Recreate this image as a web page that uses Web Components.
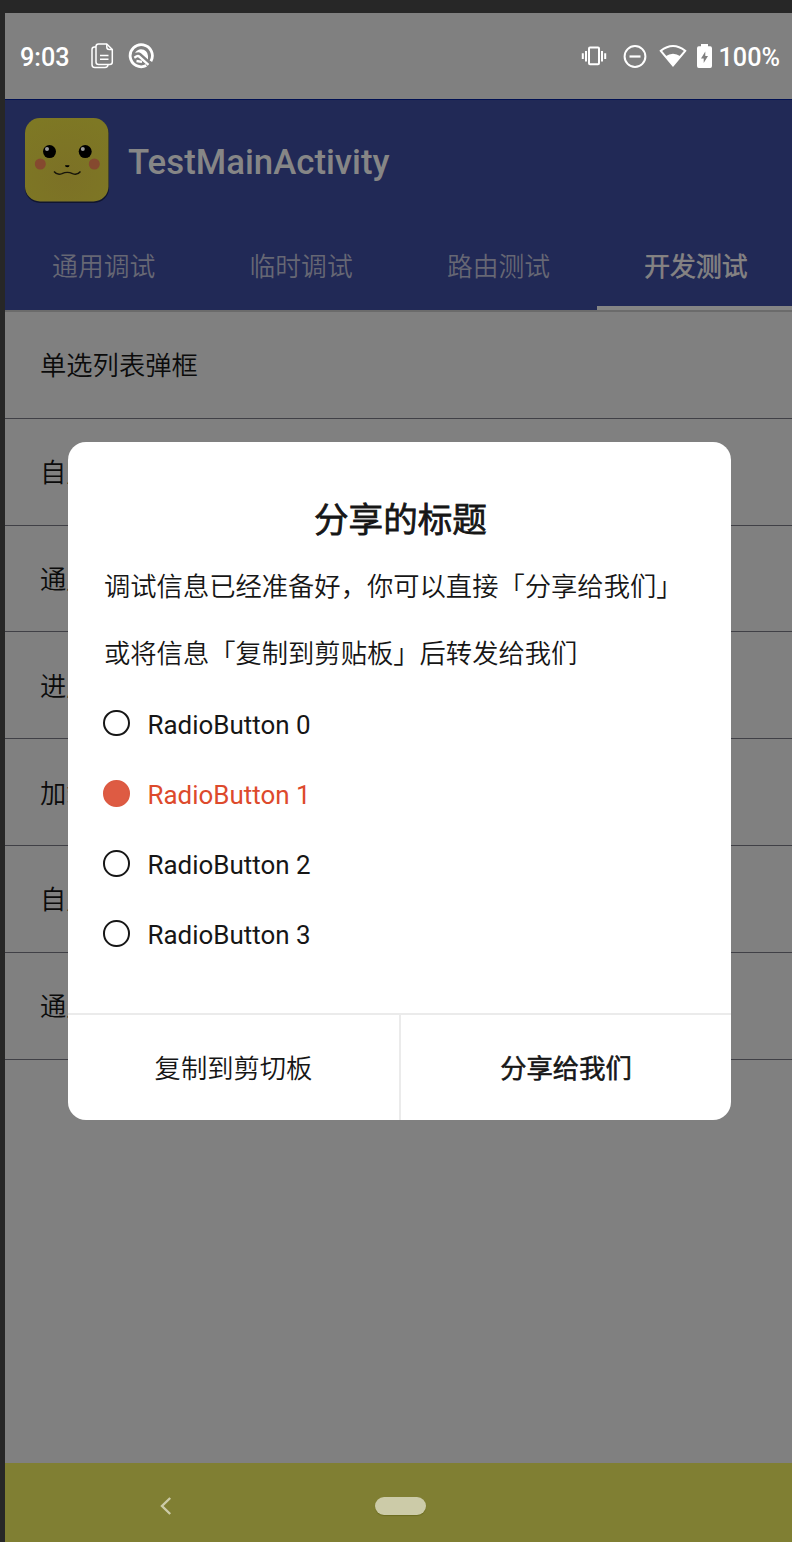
<!DOCTYPE html>
<html lang="zh-CN">
<head>
<meta charset="utf-8">
<title>TestMainActivity</title>
<style>
html,body{margin:0;height:100%;overflow:hidden}
body{background:#272727;font-family:Roboto,"Noto Sans CJK SC",sans-serif}
</style>
</head>
<body>
<phone-screen>
  <status-bar time="9:03" battery="100%"></status-bar>
  <app-bar heading="TestMainActivity">
    <app-tab>通用调试</app-tab>
    <app-tab>临时调试</app-tab>
    <app-tab>路由测试</app-tab>
    <app-tab active>开发测试</app-tab>
  </app-bar>
  <list-view>
    <list-row>单选列表弹框</list-row>
    <list-row>自定</list-row>
    <list-row>通用</list-row>
    <list-row>进度</list-row>
    <list-row>加载</list-row>
    <list-row>自定</list-row>
    <list-row>通用</list-row>
  </list-view>
  <nav-bar></nav-bar>
  <share-dialog slot="overlay">
    <span slot="title">分享的标题</span>
    <span slot="message">调试信息已经准备好，你可以直接「分享给我们」<br>或将信息「复制到剪贴板」后转发给我们</span>
    <radio-item>RadioButton 0</radio-item>
    <radio-item checked>RadioButton 1</radio-item>
    <radio-item>RadioButton 2</radio-item>
    <radio-item>RadioButton 3</radio-item>
    <span slot="cancel">复制到剪切板</span>
    <span slot="confirm">分享给我们</span>
  </share-dialog>
</phone-screen>
<script>
function define(name, html, setup) {
  const t = document.createElement('template');
  t.innerHTML = html;
  customElements.define(name, class extends HTMLElement {
    constructor() {
      super();
      this.attachShadow({mode: 'open'}).append(t.content.cloneNode(true));
      if (setup) setup(this, this.shadowRoot);
    }
  });
}

define('phone-screen', `
<style>
:host{display:block;height:1542px;box-sizing:border-box;padding:13px 0 0 5px}
.body{position:relative;height:1529px;background:#808080;display:flex;flex-direction:column;overflow:hidden}
</style>
<div class="body"><slot></slot><slot name="overlay"></slot></div>`);

define('status-bar', `
<style>
:host{display:flex;align-items:center;height:86px;padding:0 12px 0 15px;flex:none;box-sizing:border-box;color:#fff;font-size:25.2px;font-weight:500}
svg{display:block;flex:none}
span{padding-top:2px}
.time{width:71px}
.gap{flex:1}
</style>
<span class="time"></span>
<svg width="24" height="28" viewBox="0 0 24 28" fill="none" stroke="#fff" stroke-width="1.5" stroke-linejoin="round"><path d="M5 5H3.500Q1 5 1 7.500V22.500Q1 25.500 3.800 25.500H14Q16.800 25.500 17 22.800"/><path d="M7.500 2H15.800L21.300 7.500V20Q21.300 22.500 18.800 22.500H7.500Q5 22.500 5 20V4.500Q5 2 7.500 2Z"/><path d="M15.800 2V5Q15.800 7.500 18.300 7.500H21.300M9 13.500H17.500M9 17.300H17.500"/></svg>
<svg style="margin-left:12px" width="28" height="28" viewBox="0 0 28 28" fill="none" stroke="#fff"><path d="M19.300 23.600A11.100 11.100 0 1 1 23.900 19.200" stroke-width="2.800"/><path d="M8 10.800Q10.500 7.300 14 7.300Q20.500 7.800 21 14V17.500L14 11.300Q12 9.600 10 10.500Z" fill="#fff" stroke="none"/><path d="M7.300 15.800L9.700 14.300Q11.200 13.500 12.600 14.800L21.500 22.800M9.500 19L15 19.800" stroke-width="2.300"/></svg>
<span class="gap"></span>
<svg width="26" height="22" viewBox="0 0 26 22" fill="none" stroke="#fff" stroke-width="2"><rect x="8" y="2.600" width="10" height="16.600" rx="1"/><path d="M5 6V16.500M21 6V16.500M1.800 8.300V14M24.200 8.300V14"/></svg>
<svg style="margin-left:16px" width="24" height="24" viewBox="0 0 24 24" fill="none" stroke="#fff" stroke-width="2"><circle cx="12" cy="12.500" r="10.400"/><path d="M6.500 12.500H17.500" stroke-width="2.200"/></svg>
<svg style="margin-left:12px" width="28" height="24" viewBox="0 0 28 24"><path d="M1.800 6.800Q14-2.800 26.200 6.800L14 21.500Z" fill="none" stroke="#fff" stroke-width="2"/><path d="M6.500 12.300Q14 7 21.500 12.300L14 22Z" fill="#fff"/></svg>
<svg style="margin-left:10px" width="15" height="24" viewBox="0 0 15 24"><path fill="#fff" fill-rule="evenodd" d="M4 0H11V2.300H13.200Q15 2.300 15 4.200V22Q15 24 13.200 24H1.800Q0 24 0 22V4.200Q0 2.300 1.800 2.300H4ZM8.300 7.500L4 14.500H6.700V19L11 12H8.300Z"/></svg>
<span class="battery" style="margin-left:7px"></span>`, (el, root) => {
  root.querySelector('.time').textContent = el.getAttribute('time');
  root.querySelector('.battery').textContent = el.getAttribute('battery');
});

define('app-bar', `
<style>
:host{display:flex;flex-direction:column;height:213px;flex:none;box-sizing:border-box;background:#212956;border-top:1px solid #001052;border-bottom:2px solid #6b6b6b}
.head{display:flex;align-items:center;height:120px;gap:18px;padding-left:19px}
h1{margin:4px 0 0;font-size:34.800px;font-weight:500;color:#868686;line-height:42px}
.tabs{display:flex;flex:1;width:789.600px}
svg{display:block}
</style>
<div class="head">
<svg width="86" height="86" viewBox="0 0 86 86">
<defs><radialGradient id="g" cx=".5" cy=".7" r=".75"><stop offset="0" stop-color="#7c7126"/><stop offset="1" stop-color="#7e7824"/></radialGradient></defs>
<rect x="1" y="2" width="84" height="84" rx="15" fill="#10152f"/>
<rect x="1" y="1" width="83.500" height="83.500" rx="15" fill="url(#g)"/>
<circle cx="25.500" cy="34.600" r="6.500"/><circle cx="61.200" cy="34.600" r="6.500"/>
<circle cx="23" cy="32" r="2" fill="#999"/><circle cx="58.800" cy="32" r="2" fill="#999"/>
<circle cx="16.300" cy="47" r="5.500" fill="#85492f"/><circle cx="70.300" cy="47" r="5.500" fill="#85492f"/>
<path d="M41 48.300H45.500Q45.500 50.300 43.300 50.300Q41 50.300 41 48.300Z"/>
<path d="M30 54.500Q33 58.500 38 56.700Q43.300 54 48.500 56.700Q53.500 58.500 56.500 54.500" fill="none" stroke="#17150a" stroke-width="1.300"/>
</svg><h1></h1></div>
<div class="tabs"><slot></slot></div>`, (el, root) => {
  root.querySelector('h1').textContent = el.getAttribute('heading');
});

define('app-tab', `
<style>
:host{display:flex;flex:1;align-items:center;justify-content:center;box-sizing:border-box;padding-top:8px;font-size:25.8px;font-weight:350;line-height:38px;color:#666774;border-bottom:4px solid transparent}
:host([active]){color:#858383;-webkit-text-stroke:.7px #858383;border-bottom-color:#858585}
</style><slot></slot>`);

define('list-view', `<style>:host{display:block;flex:1;background:#808080}</style><slot></slot>`);

define('list-row', `
<style>
:host{display:flex;align-items:center;height:106.8px;box-sizing:border-box;padding:3px 0 0 35px;border-bottom:1.500px solid #404046;color:#0b0b0b;font-size:26.3px;font-weight:350;line-height:40px}
</style><slot></slot>`);

define('nav-bar', `
<style>
:host{display:grid;grid-template-columns:321px 148px 1fr;align-items:center;justify-items:center;height:79px;flex:none;background:#807f33;padding-top:6px;box-sizing:border-box}
.pill{width:51px;height:18px;border-radius:9px;background:#cccba8;box-shadow:0 1px 1px #6b6c20}
svg{display:block}
</style>
<svg width="12" height="20" viewBox="0 0 12 20" fill="none" stroke="#cccba8" stroke-width="2.400"><path d="M10.200 2L2 10L10.200 18"/></svg>
<div class="pill"></div>`);

define('share-dialog', `
<style>
:host{position:absolute;left:63px;top:429px;width:663px;height:678px;box-sizing:border-box;background:#fff;border-radius:18px;overflow:hidden;display:flex;flex-direction:column;color:#161616;font-size:26.3px;font-weight:350}
.title{margin:52px 0 0 2px;text-align:center;font-size:34.600px;line-height:52px;-webkit-text-stroke:.9px #161616}
.msg{margin:8px 0 0 36px;line-height:67px;white-space:nowrap}
.list{margin:0 0 0 35px}
.foot{margin-top:auto;display:grid;grid-template-columns:331px 1fr;height:107px;box-sizing:border-box;border-top:2px solid #ebebeb}
.foot div{display:flex;align-items:center;justify-content:center;line-height:40px;padding-top:2px}
.foot div+div{border-left:2px solid #ebebeb;-webkit-text-stroke:.7px #161616}
</style>
<div class="title"><slot name="title"></slot></div>
<div class="msg"><slot name="message"></slot></div>
<div class="list"><slot></slot></div>
<div class="foot"><div><slot name="cancel"></slot></div><div><slot name="confirm"></slot></div></div>`);

define('radio-item', `
<style>
:host{display:flex;align-items:center;height:70.200px;gap:18px;line-height:32px;font-size:25.950px;font-weight:390}
i{width:26.500px;height:26.500px;box-sizing:border-box;border:2px solid #161616;border-radius:50%}
span{padding-top:3px}
:host([checked]){color:#dd4a2c}
:host([checked]) i{background:#de5b43;border-color:#dc5a42}
</style><i></i><span><slot></slot></span>`);
</script>
</body>
</html>
